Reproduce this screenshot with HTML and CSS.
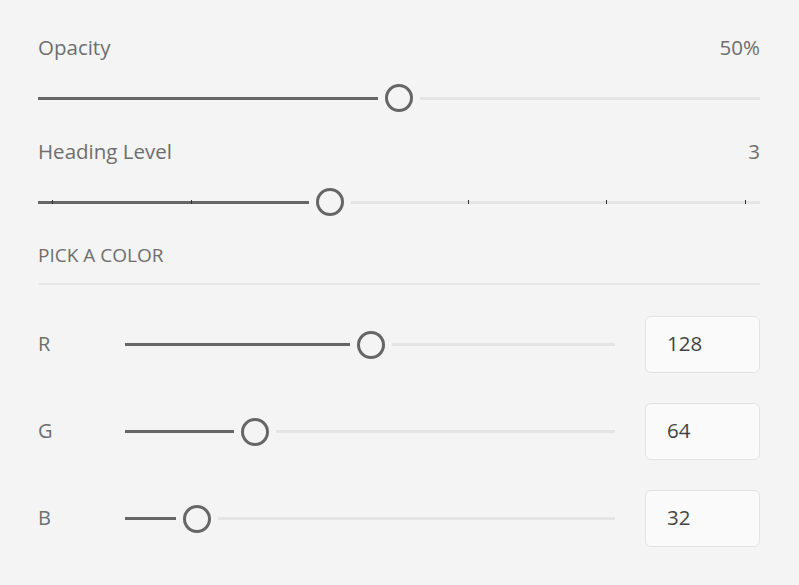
FILE: index.html
```html
<!DOCTYPE html>
<html lang="en">
<head>
    <meta charset="UTF-8">
    <meta name="viewport" content="width=device-width, initial-scale=1.0">
    <title>Sliders</title>
    <link rel="stylesheet" href="styles.css">
</head>
<body>
    <div class="panel">
        <div class="setting">
            <div class="setting-head">
                <span>Opacity</span>
                <span>50%</span>
            </div>
            <div class="slider">
                <div class="fill" style="width: calc((100% - 28px) * 0.5 - 7px)"></div>
                <div class="thumb"></div>
                <div class="rest"></div>
            </div>
        </div>

        <div class="setting">
            <div class="setting-head">
                <span>Heading Level</span>
                <span>3</span>
            </div>
            <div class="slider">
                <div class="fill" style="width: calc((100% - 28px) * 0.4 - 7px)"></div>
                <div class="thumb"></div>
                <div class="rest"></div>
                <div class="ticks">
                    <i></i><i></i><i></i><i></i><i></i><i></i>
                </div>
            </div>
        </div>

        <div class="section-title">PICK A COLOR</div>

        <div class="color-rows">
            <div class="color-row">
                <span class="channel">R</span>
                <div class="slider">
                    <div class="fill" style="width: calc((100% - 28px) * 0.502 - 7px)"></div>
                    <div class="thumb"></div>
                    <div class="rest"></div>
                </div>
                <input class="channel-input" type="text" value="128">
            </div>
            <div class="color-row">
                <span class="channel">G</span>
                <div class="slider">
                    <div class="fill" style="width: calc((100% - 28px) * 0.251 - 7px)"></div>
                    <div class="thumb"></div>
                    <div class="rest"></div>
                </div>
                <input class="channel-input" type="text" value="64">
            </div>
            <div class="color-row">
                <span class="channel">B</span>
                <div class="slider">
                    <div class="fill" style="width: calc((100% - 28px) * 0.125 - 7px)"></div>
                    <div class="thumb"></div>
                    <div class="rest"></div>
                </div>
                <input class="channel-input" type="text" value="32">
            </div>
        </div>
    </div>
</body>
</html>
```

FILE: styles.css
```css
body {
    margin: 0;
    background: #f4f4f4;
    color: #6e6e6e;
    font-family: 'Open Sans', 'Noto Sans', sans-serif;
}

.panel {
    padding: 33px 39px 0 38px;
}

.setting {
    margin-bottom: 25px;
}

.setting-head {
    display: flex;
    justify-content: space-between;
    font-size: 20.5px;
    line-height: 28px;
    margin-bottom: 23px;
}

/* slider: filled part, thumb, remaining track */
.slider {
    position: relative;
    display: flex;
    align-items: center;
    height: 28px;
}

.fill {
    height: 3px;
    background: #666;
    flex-shrink: 0;
}

.thumb {
    width: 28px;
    height: 28px;
    box-sizing: border-box;
    border: 3px solid #666;
    border-radius: 50%;
    margin: 0 7px;
    flex-shrink: 0;
}

.rest {
    flex: 1;
    height: 3px;
    background: #e4e4e4;
}

.ticks {
    position: absolute;
    left: 14px;
    right: 14px;
    top: 12px;
    display: flex;
    justify-content: space-between;
}

.ticks i {
    width: 1px;
    height: 4px;
    background: #333;
}

.ticks i:nth-child(3) {
    visibility: hidden;
}

.section-title {
    font-size: 19px;
    line-height: 24px;
    margin-top: 27px;
    padding-bottom: 16px;
    border-bottom: 2px solid #e6e6e6;
}

.color-rows {
    display: flex;
    flex-direction: column;
    gap: 30px;
    margin-top: 31px;
}

.color-row {
    display: flex;
    align-items: center;
}

.channel {
    width: 87px;
    font-size: 20px;
    padding-bottom: 2px;
}

.color-row .slider {
    flex: 1;
    margin-right: 30px;
}

.channel-input {
    width: 115px;
    height: 57px;
    box-sizing: border-box;
    padding: 0 0 3px 21px;
    border: 1px solid #e2e2e2;
    border-radius: 6px;
    background: #fafafa;
    color: #444;
    font-family: inherit;
    font-size: 20.5px;
}
```
